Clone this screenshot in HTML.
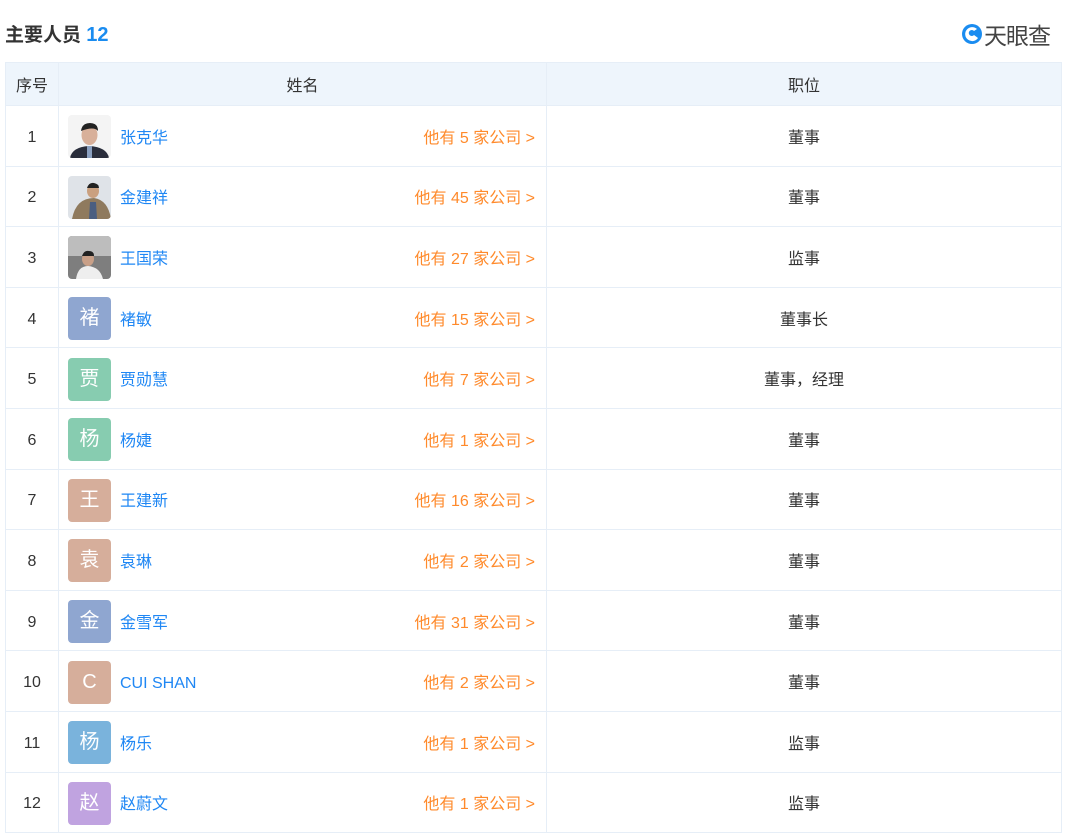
<!DOCTYPE html>
<html><head><meta charset="utf-8"><style>
*{margin:0;padding:0;box-sizing:border-box}
body{width:1080px;height:835px;background:#fff;font-family:"Liberation Sans","Noto Sans CJK SC",sans-serif;color:#333;position:relative;overflow:hidden}
.title{position:absolute;left:5px;top:20px;font-size:19px;font-weight:bold;color:#333}
.title b{color:#1a8cf0;font-size:20px}
.logo{position:absolute;left:961px;top:17px;display:flex;align-items:center;font-size:23px;color:#444;letter-spacing:-1px}
.logo span{margin-left:1px}
table{position:absolute;left:5px;top:62px;width:1057px;border-collapse:collapse;font-size:16px;table-layout:fixed}
td,th{border:1px solid #e6eef7;text-align:center;font-weight:normal;vertical-align:middle;padding:0}
th{background:#eef5fc;height:43px;color:#333}
td{height:60.6px;color:#333}
td.i{padding-top:4px}
.nm{text-align:left}
.w{display:flex;align-items:center;height:59px;padding-left:9px;padding-right:11px}
.av{flex:none;width:43px;height:43px;border-radius:4px;color:#fff;font-size:20px;line-height:43px;text-align:center;overflow:hidden;position:relative;top:1px}
.n{color:#1f87f4;margin-left:9px;font-size:16px}
.l{position:relative;top:3px}
.c{margin-left:auto;color:#ff8a2b;font-size:16px}
</style></head><body>
<div class="title">主要人员 <b>12</b></div>
<div class="logo"><svg width="22" height="22" viewBox="0 0 22 22"><circle cx="11" cy="11" r="10" fill="#1a8cf0"/><path d="M16 6 A7 7 0 1 0 17 15 L13 12 A3 3 0 1 1 13 8Z" fill="#fff"/></svg><span>天眼查</span></div>
<table>
<colgroup><col style="width:53px"><col style="width:488px"><col></colgroup>
<tr><th>序号</th><th>姓名</th><th>职位</th></tr>
<tr><td class="i">1</td><td class="nm"><div class="w"><span class="av" style="background:#f4f4f4"><svg width="43" height="43"><path d="M2 43 Q4 32 21 31 Q39 32 41 43Z" fill="#2a2e3c"/><rect x="19" y="31" width="5" height="12" fill="#8ba0c0"/><ellipse cx="21.5" cy="20" rx="8" ry="10" fill="#d8b09a"/><path d="M13 16 Q14 8 22 8 Q30 8 30 16 Q26 11 13 16Z" fill="#222"/></svg></span><span class="n">张克华</span><span class="c">他有 5 家公司 &gt;</span></div></td><td>董事</td></tr>
<tr><td class="i">2</td><td class="nm"><div class="w"><span class="av" style="background:#dfe3e8"><svg width="43" height="43"><path d="M4 43 Q8 22 26 22 Q40 24 43 43Z" fill="#8f7a5e"/><path d="M22 26 L28 26 L29 43 L21 43Z" fill="#4a5e80"/><ellipse cx="25" cy="15" rx="6" ry="7" fill="#caa07f"/><path d="M19 12 Q21 6 26 7 Q31 8 31 12Z" fill="#222"/></svg></span><span class="n">金建祥</span><span class="c">他有 45 家公司 &gt;</span></div></td><td>董事</td></tr>
<tr><td class="i">3</td><td class="nm"><div class="w"><span class="av" style="background:#7e7e7e"><svg width="43" height="43"><rect width="43" height="20" fill="#bdbdbd"/><path d="M8 43 Q10 30 20 30 Q32 31 35 43Z" fill="#eee"/><ellipse cx="20" cy="23" rx="6" ry="7" fill="#c9a088"/><path d="M14 20 Q16 14 21 15 Q26 15 26 20Z" fill="#222"/></svg></span><span class="n">王国荣</span><span class="c">他有 27 家公司 &gt;</span></div></td><td>监事</td></tr>
<tr><td class="i">4</td><td class="nm"><div class="w"><span class="av" style="background:#8fa6d0">褚</span><span class="n">褚敏</span><span class="c">他有 15 家公司 &gt;</span></div></td><td>董事长</td></tr>
<tr><td class="i">5</td><td class="nm"><div class="w"><span class="av" style="background:#87ccb0">贾</span><span class="n">贾勋慧</span><span class="c">他有 7 家公司 &gt;</span></div></td><td>董事，经理</td></tr>
<tr><td class="i">6</td><td class="nm"><div class="w"><span class="av" style="background:#87ccb0">杨</span><span class="n">杨婕</span><span class="c">他有 1 家公司 &gt;</span></div></td><td>董事</td></tr>
<tr><td class="i">7</td><td class="nm"><div class="w"><span class="av" style="background:#d6ae9b">王</span><span class="n">王建新</span><span class="c">他有 16 家公司 &gt;</span></div></td><td>董事</td></tr>
<tr><td class="i">8</td><td class="nm"><div class="w"><span class="av" style="background:#d6ae9b">袁</span><span class="n">袁琳</span><span class="c">他有 2 家公司 &gt;</span></div></td><td>董事</td></tr>
<tr><td class="i">9</td><td class="nm"><div class="w"><span class="av" style="background:#8fa6d0">金</span><span class="n">金雪军</span><span class="c">他有 31 家公司 &gt;</span></div></td><td>董事</td></tr>
<tr><td class="i">10</td><td class="nm"><div class="w"><span class="av" style="background:#d6ae9b">C</span><span class="n l">CUI SHAN</span><span class="c">他有 2 家公司 &gt;</span></div></td><td>董事</td></tr>
<tr><td class="i">11</td><td class="nm"><div class="w"><span class="av" style="background:#7ab3dc">杨</span><span class="n">杨乐</span><span class="c">他有 1 家公司 &gt;</span></div></td><td>监事</td></tr>
<tr><td class="i">12</td><td class="nm"><div class="w"><span class="av" style="background:#c0a3e0">赵</span><span class="n">赵蔚文</span><span class="c">他有 1 家公司 &gt;</span></div></td><td>监事</td></tr>
</table>
</body></html>
